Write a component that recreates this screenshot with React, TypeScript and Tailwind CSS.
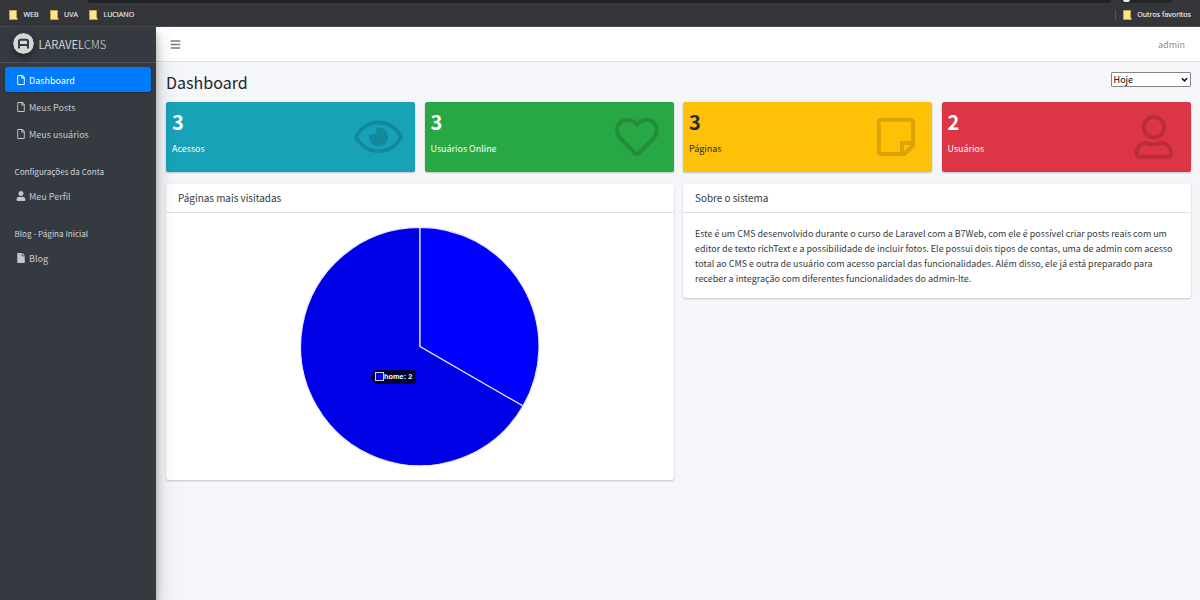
import type { ReactNode } from "react";
import {
  FaBars,
  FaFile,
  FaRegEye,
  FaRegFile,
  FaRegHeart,
  FaRegStickyNote,
  FaRegUser,
  FaUser,
} from "react-icons/fa";

function Bookmark({ label }: { label: string }) {
  return (
    <div className="flex items-center gap-[5.500px]">
      <svg width="9" height="10" viewBox="0 0 9 10">
        <path d="M.5 .5h7v7.500h.8v1.500H.5z" fill="#fee48a" stroke="#d9b64a" strokeWidth=".6" />
      </svg>
      <span className="text-[7.100px] leading-none text-[#e8eaed] [-webkit-text-stroke:0.15px_#e8eaed]">
        {label}
      </span>
    </div>
  );
}

function BrowserBar() {
  return (
    <div className="flex h-[27px] flex-col border-b border-[#4a4b4f] bg-[#35363a] font-['Open_Sans',sans-serif]">
      <div className="flex h-[4px] shrink-0 pl-[88px]">
        <div className="h-[3px] w-[1023px] rounded-b-lg bg-[#202124]" />
        <div className="ml-[10px] h-[3px] w-[52px] rounded-b-lg bg-[#252629] pl-[2px]">
          <div className="h-[2px] w-[7px] rounded-b-full bg-[#e8eaed]" />
        </div>
      </div>
      <div className="flex flex-1 items-center pt-px pr-[9px] pb-[2px] pl-[9px]">
        <div className="w-[40.500px]"><Bookmark label="WEB" /></div>
        <div className="w-[39.500px]"><Bookmark label="UVA" /></div>
        <Bookmark label="LUCIANO" />
        <div className="mr-[7px] ml-auto h-[10px] w-px bg-[#55565a]" />
        <Bookmark label="Outros favoritos" />
      </div>
    </div>
  );
}

function NavItem({ icon, label, active }: { icon: ReactNode; label: string; active?: boolean }) {
  return (
    <div
      className={
        "mb-[2px] flex h-[25px] items-center rounded-[3px] pl-[9px] text-[9px] " +
        (active ? "bg-[#007bff] text-white shadow-[0_1px_2px_rgba(0,0,0,0.24)]" : "text-[#c2c7d0]")
      }
    >
      <span className="flex w-[14px] justify-center text-[10px]">{icon}</span>
      <span className="pt-px pl-px leading-[11px]">{label}</span>
    </div>
  );
}

function NavHeader({ label }: { label: string }) {
  return <div className="h-[35px] pt-[18.500px] pl-[9.500px] text-[8.100px] leading-[10px] text-[#d0d4db]">{label}</div>;
}

function Sidebar() {
  return (
    <aside className="z-10 w-[156px] shrink-0 bg-[#343a40] shadow-[0_9px_18px_rgba(0,0,0,0.25),0_6px_6px_rgba(0,0,0,0.22)]">
      <div className="flex h-[36px] items-center border-b border-[#4b545c] pb-[2px] pl-[13px]">
        <svg className="rounded-full shadow-[0_3px_6px_rgba(0,0,0,0.4)]" width="21" height="21" viewBox="0 0 21 21">
          <circle cx="10.500" cy="10.500" r="10.500" fill="#d5d6d8" />
          <path
            d="M6 15.500V8.300Q6 6.700 7.600 6.700H13.400Q15 6.700 15 8.300V15.500M6 11.900H15"
            fill="none"
            stroke="#343a40"
            strokeWidth="2"
          />
        </svg>
        <span className="mt-[2px] ml-[4.500px] text-[11.150px] leading-none text-[#d3d6da]">
          LARAVEL<span className="font-light">CMS</span>
        </span>
      </div>
      <nav className="px-[5px] pt-[4px]">
        <NavItem icon={<FaRegFile />} label="Dashboard" active />
        <NavItem icon={<FaRegFile />} label="Meus Posts" />
        <NavItem icon={<FaRegFile />} label="Meus usuários" />
        <NavHeader label="Configurações da Conta" />
        <NavItem icon={<FaUser />} label="Meu Perfil" />
        <NavHeader label="Blog - Página Inicial" />
        <NavItem icon={<FaFile />} label="Blog" />
      </nav>
    </aside>
  );
}

function StatCard({ value, label, icon, tone }: { value: string; label: string; icon: ReactNode; tone: string }) {
  return (
    <div
      className={
        "flex h-[70.400px] items-start justify-between rounded-[2.500px] pr-[9.400px] pl-[6px] shadow-[0_0_1px_rgba(0,0,0,0.13),0_1px_2px_rgba(0,0,0,0.2)] " +
        tone
      }
    >
      <div>
        <div className="mt-[9px] text-[20px] leading-[22px] font-bold">{value}</div>
        <div className="mt-[10px] text-[8.950px] leading-[12px]">{label}</div>
      </div>
      <div className="mt-[13px] flex w-[54.700px] justify-center text-[43.750px] text-black/15">{icon}</div>
    </div>
  );
}

function Card({ title, children }: { title: string; children: ReactNode }) {
  return (
    <section className="rounded-[2.500px] bg-white shadow-[0_0_1px_rgba(0,0,0,0.13),0_1px_2px_rgba(0,0,0,0.2)]">
      <h2 className="h-[29px] border-b border-black/12 pl-[12px] text-[9.920px] leading-[28px] text-[#343a40]">{title}</h2>
      {children}
    </section>
  );
}

function PieChart() {
  return (
    <div className="relative h-[267px]">
      <svg className="mx-auto block" width="240" height="267" viewBox="300 213 240 267">
        <g stroke="#e6e6ff" strokeWidth="1.200" strokeLinejoin="round">
          <path d="M419.800 346.500V227.300A119.200 119.200 0 0 1 523.030 406.100Z" fill="#0000ff" />
          <path d="M419.800 346.500L523.030 406.100A119.200 119.200 0 1 1 419.800 227.300Z" fill="#0000e6" />
        </g>
      </svg>
      <div className="absolute top-[157px] left-[204px] flex items-center">
        <div className="border-y-[3px] border-r-[3px] border-y-transparent border-r-black/80" />
        <div className="flex h-[14px] w-[43px] items-center rounded-[3px] bg-black/80 pl-[2px] font-['Liberation_Sans',sans-serif]">
          <span className="size-[9px] border border-[#d5d5e6] bg-[#0000ff]" />
          <span className="text-[7.400px] leading-none font-bold text-white">home: 2</span>
        </div>
      </div>
    </div>
  );
}

export default function App() {
  return (
    <div className="flex h-[600px] w-[1200px] flex-col overflow-hidden bg-[#f4f6f9] font-['Noto_Sans_CJK_SC',sans-serif] text-[#212529]">
      <BrowserBar />
      <div className="flex min-h-0 flex-1">
        <Sidebar />
        <div className="flex flex-1 flex-col">
          <header className="flex h-[35px] items-center justify-between border-b border-[#dee2e6] bg-white pr-[15px] pl-[14px]">
            <FaBars className="text-[11px] text-[#7b7b7b]" />
            <span className="text-[9px] leading-none text-[#8f8f8f]">admin</span>
          </header>
          <main className="pr-[9.400px] pl-[10px]">
            <div className="flex h-[40px] items-start justify-between">
              <h1 className="mt-[9px] text-[16.050px] leading-[22px]">Dashboard</h1>
              <div className="relative mt-[10px] h-[15px] w-[80px]">
                <select className="block h-[15px] w-full appearance-none rounded-[1px] border border-[#858585] bg-white pl-[2px] text-[9px] leading-[13px] text-black">
                  <option>Hoje</option>
                </select>
                <svg className="absolute top-[5px] right-[3px]" width="7" height="6" viewBox="0 0 7 6">
                  <path d="M.8 1.200L3.500 3.900L6.200 1.200" fill="none" stroke="#111" strokeWidth="1.500" />
                </svg>
              </div>
            </div>
            <div className="grid grid-cols-4 gap-[9.400px]">
              <StatCard value="3" label="Acessos" icon={<FaRegEye className="h-[43.750px] w-[49.200px]" />} tone="bg-[#17a2b8] text-white" />
              <StatCard value="3" label="Usuários Online" icon={<FaRegHeart />} tone="bg-[#28a745] text-white" />
              <StatCard value="3" label="Páginas" icon={<FaRegStickyNote />} tone="bg-[#ffc107] text-[#1f2d3d]" />
              <StatCard value="2" label="Usuários" icon={<FaRegUser />} tone="bg-[#dc3545] text-white" />
            </div>
            <div className="mt-[11.600px] grid grid-cols-2 items-start gap-[9.400px]">
              <Card title="Páginas mais visitadas">
                <PieChart />
              </Card>
              <Card title="Sobre o sistema">
                <p className="h-[85.500px] pt-[13px] pl-[12px] text-[8.960px] leading-[15px] whitespace-nowrap text-[#343a40]">
                  Este é um CMS desenvolvido durante o curso de Laravel com a B7Web, com ele é possível criar posts reais com um
                  <br />
                  editor de texto richText e a possibilidade de incluir fotos. Ele possui dois tipos de contas, uma de admin com acesso
                  <br />
                  total ao CMS e outra de usuário com acesso parcial das funcionalidades. Além disso, ele já está preparado para
                  <br />
                  receber a integração com diferentes funcionalidades do admin-lte.
                </p>
              </Card>
            </div>
          </main>
        </div>
      </div>
    </div>
  );
}
